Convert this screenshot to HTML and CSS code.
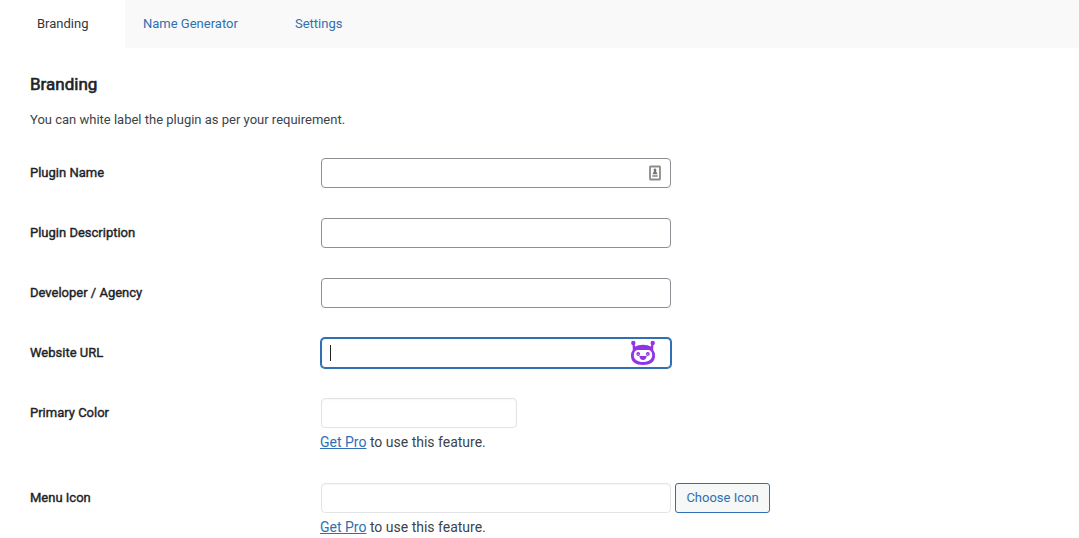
FILE: index.html
```html
<!DOCTYPE html>
<html lang="en">
<head>
<meta charset="utf-8">
<title>Branding</title>
<link rel="stylesheet" href="styles.css">
</head>
<body>
<nav class="tabs">
  <a class="tab tab-branding active">Branding</a>
  <a class="tab tab-generator">Name Generator</a>
  <a class="tab tab-settings">Settings</a>
</nav>
<main class="panel">
  <h2 class="title">Branding</h2>
  <p class="intro">You can white label the plugin as per your requirement.</p>
  <div class="form">
    <div class="row">
      <div class="label">Plugin Name</div>
      <div class="field"><div class="input with-card">
        <svg class="card-icon" width="12" height="16" viewBox="0 0 12 16"><rect x="1" y="1.500" width="10" height="13" rx="0.500" fill="#fff" stroke="#8c8c8c" stroke-width="1.800"/><path d="M6 3.500a1.400 1.400 0 0 1 1 2.400L8.500 9.300h-5L5 5.900a1.400 1.400 0 0 1 1-2.400Z" fill="#757575"/><path d="M3.300 11h5.400" stroke="#999" stroke-width="1.800"/></svg>
      </div></div>
    </div>
    <div class="row">
      <div class="label">Plugin Description</div>
      <div class="field"><div class="input"></div></div>
    </div>
    <div class="row">
      <div class="label">Developer / Agency</div>
      <div class="field"><div class="input"></div></div>
    </div>
    <div class="row">
      <div class="label">Website URL</div>
      <div class="field"><div class="input focused">
        <span class="caret"></span>
        <svg class="bot-icon" width="26" height="26" viewBox="0 0 26 26">
          <g fill="#9333e6"><circle cx="3.300" cy="3" r="2.200"/><circle cx="22.700" cy="3" r="2.200"/><path d="M2.500 3.500h1.800l.9 3Q8 4.800 13 4.800t7.800 1.700l.9-3h1.800l-.3 6.500Q25 12 25 16c0 6-5 9-12 9S1 22 1 16q0-4 1.800-6Z"/></g>
          <path d="M8.500 10h9c3.300 0 4.700 2 4.700 5 0 4.900-4 7-9.200 7s-9.200-2.100-9.200-7c0-3 1.400-5 4.700-5Z" fill="#fff"/>
          <g fill="#9333e6"><circle cx="8.200" cy="14" r="1.900"/><circle cx="17.800" cy="14" r="1.900"/><path d="M9.300 16h7.400q-.6 4-3.700 4T9.300 16Z"/></g>
          <path d="M7.300 14.900q1-1.200 2 0M16.700 14.900q1-1.200 2 0" fill="none" stroke="#fff" stroke-width=".5"/>
        </svg>
      </div></div>
    </div>
    <div class="row tall">
      <div class="label">Primary Color</div>
      <div class="field"><div class="input disabled short"></div>
        <p class="note"><a class="link">Get Pro</a> to use this feature.</p></div>
    </div>
    <div class="row">
      <div class="label">Menu Icon</div>
      <div class="field"><div class="line"><div class="input disabled"></div><button class="button">Choose Icon</button></div>
        <p class="note"><a class="link">Get Pro</a> to use this feature.</p></div>
    </div>
  </div>
</main>
</body>
</html>
```
FILE: styles.css
```css
* { box-sizing: border-box; }
body {
  margin: 0;
  background: #fff;
  color: #3c434a;
  font: 13px/20px Roboto, sans-serif;
}
.tabs { display: flex; height: 48px; background: #f9f9f9; }
.tab { color: #2e70b3; line-height: 20px; padding-top: 14px; }
.tab-branding { width: 125px; padding-left: 37px; }
.tab-generator { width: 152px; padding-left: 18px; }
.tab-settings { padding-left: 18px; }
.active { background: #fff; color: #32373c; }
.panel { height: 490px; padding: 24px 30px 0; }
.title {
  margin: 0;
  font-size: 17px;
  line-height: 24px;
  font-weight: 400;
  color: #1d2327;
  -webkit-text-stroke: 0.6px #1d2327;
}
.intro { margin: 14px 0 0; line-height: 20px; }
.form { margin-top: 28px; }
.row { display: flex; height: 60px; }
.tall { height: 85px; }
.label {
  width: 291px;
  padding-top: 5px;
  color: #1d2327;
  -webkit-text-stroke: 0.4px #1d2327;
}
.input {
  position: relative;
  width: 350px;
  height: 30px;
  border: 1px solid #8c8f94;
  border-radius: 4px;
  background: #fff;
}
.short { width: 196px; }
.disabled { border-color: #e2e3e4; box-shadow: inset 0 1px 2px rgba(0, 0, 0, .04); }
.focused { border-color: #2e70b3; box-shadow: 0 0 0 1px #2e70b3; }
.card-icon { position: absolute; top: 6px; right: 9px; }
.bot-icon { position: absolute; top: 1px; right: 14px; }
.caret { position: absolute; left: 8px; top: 6px; width: 1px; height: 16px; background: #1d2327; }
.line { display: flex; gap: 4px; }
.button {
  width: 95px;
  height: 30px;
  padding: 0;
  border: 1px solid #2e70b3;
  border-radius: 3px;
  background: #f6f7f7;
  color: #2e70b3;
  font: 13px/28px Roboto, sans-serif;
}
.note { margin: 4px 0 0 -1px; font-size: 14px; line-height: 20px; }
.link { color: #2e70b3; text-decoration: underline; }
```
